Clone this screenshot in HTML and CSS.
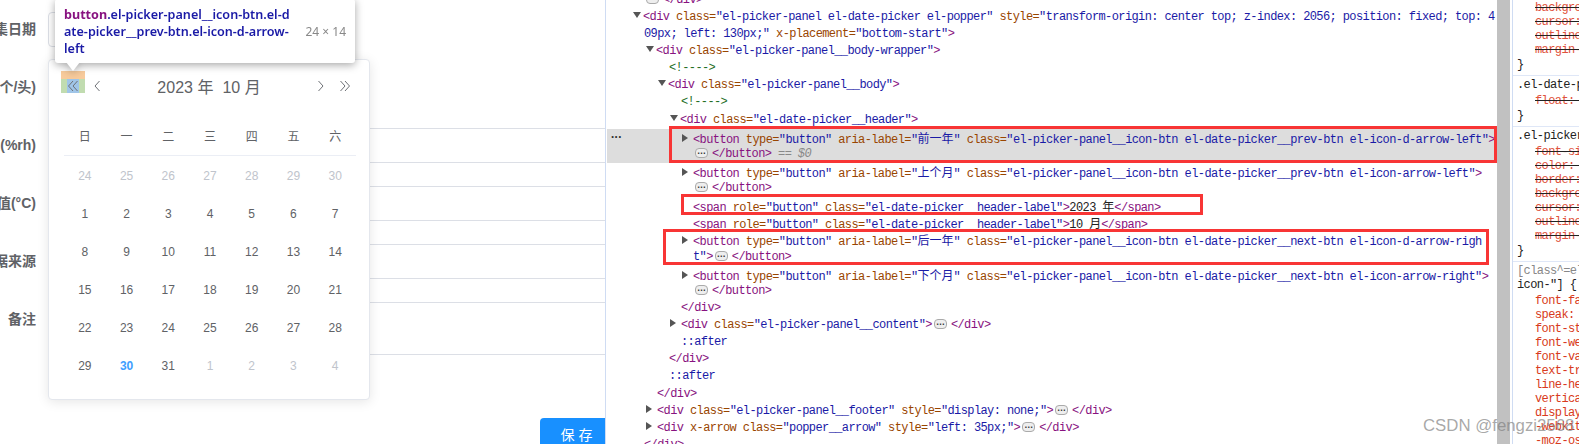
FILE: index.html
```html
<!DOCTYPE html>
<html lang="zh-CN">
<head>
<meta charset="utf-8">
<title>el-date-picker devtools</title>
<link rel="stylesheet" href="styles.css">
</head>
<body>
<div class="page">
  <section class="app">
    <div class="row"><div class="label"><span>采集日期</span></div><div class="input short"></div></div>
    <div class="row"><div class="label"><span>数量(个/头)</span></div><div class="input short"></div></div>
    <div class="row"><div class="label"><span>湿度(%rh)</span></div><div class="input"></div></div>
    <div class="row"><div class="label"><span>阈值(°C)</span></div><div class="input"></div></div>
    <div class="row"><div class="label"><span>数据来源</span></div><div class="input"></div></div>
    <div class="row tall"><div class="label"><span>备注</span></div><div class="input"></div></div>
    <button class="save" type="button">保存</button>

    <div class="panel">
      <div class="hd">
        <div class="btn hl"><span class="content"><svg width="12" height="14" viewBox="0 0 12 14"><path d="M6 2 1.5 7 6 12M10.5 2 6 7l4.500 5"/></svg></span></div>
        <div class="btn"><svg width="12" height="14" viewBox="0 0 12 14"><path d="M8.500 2 4 7l4.500 5"/></svg></div>
        <div class="title"><span>2023 年</span><span>10 月</span></div>
        <div class="btn"><svg width="12" height="14" viewBox="0 0 12 14"><path d="M3.500 2 8 7l-4.500 5"/></svg></div>
        <div class="btn"><svg width="12" height="14" viewBox="0 0 12 14"><path d="M1.500 2 6 7l-4.500 5M6 2l4.500 5L6 12"/></svg></div>
      </div>
      <div class="cal">
        <div class="wk">日</div><div class="wk">一</div><div class="wk">二</div><div class="wk">三</div><div class="wk">四</div><div class="wk">五</div><div class="wk">六</div>
        <div class="d off">24</div><div class="d off">25</div><div class="d off">26</div><div class="d off">27</div><div class="d off">28</div><div class="d off">29</div><div class="d off">30</div>
        <div class="d">1</div><div class="d">2</div><div class="d">3</div><div class="d">4</div><div class="d">5</div><div class="d">6</div><div class="d">7</div>
        <div class="d">8</div><div class="d">9</div><div class="d">10</div><div class="d">11</div><div class="d">12</div><div class="d">13</div><div class="d">14</div>
        <div class="d">15</div><div class="d">16</div><div class="d">17</div><div class="d">18</div><div class="d">19</div><div class="d">20</div><div class="d">21</div>
        <div class="d">22</div><div class="d">23</div><div class="d">24</div><div class="d">25</div><div class="d">26</div><div class="d">27</div><div class="d">28</div>
        <div class="d">29</div><div class="d today">30</div><div class="d">31</div><div class="d off">1</div><div class="d off">2</div><div class="d off">3</div><div class="d off">4</div>
      </div>
    </div>

    <div class="tip">
      <div class="tip-name"><b>button</b>.el-picker-panel__icon-btn.el-d<br>ate-picker__prev-btn.el-icon-d-arrow-<br>left</div>
      <div class="tip-size">24 × 14</div>
    </div>
  </section>

  <section class="dom">
    <div class="tree">
      <div class="r i0"><span class="pill">…</span><span class="t">&lt;/div&gt;</span></div>
      <div class="r i0"><i class="tri open"></i><span class="t">&lt;div</span> <span class="a">class=</span><span class="v">"el-picker-panel el-date-picker el-popper"</span> <span class="a">style=</span><span class="v">"transform-origin: center top; z-index: 2056; position: fixed; top: 4</span></div>
      <div class="r i0"><span class="v">09px; left: 130px;"</span> <span class="a">x-placement=</span><span class="v">"bottom-start"</span><span class="t">&gt;</span></div>
      <div class="r i1"><i class="tri open"></i><span class="t">&lt;div</span> <span class="a">class=</span><span class="v">"el-picker-panel__body-wrapper"</span><span class="t">&gt;</span></div>
      <div class="r i2"><span class="c">&lt;!----&gt;</span></div>
      <div class="r i2"><i class="tri open"></i><span class="t">&lt;div</span> <span class="a">class=</span><span class="v">"el-picker-panel__body"</span><span class="t">&gt;</span></div>
      <div class="r i3"><span class="c">&lt;!----&gt;</span></div>
      <div class="r i3"><i class="tri open"></i><span class="t">&lt;div</span> <span class="a">class=</span><span class="v">"el-date-picker__header"</span><span class="t">&gt;</span></div>
      <div class="sel">
        <span class="dots">···</span>
        <div class="r i4"><i class="tri"></i><span class="t">&lt;button</span> <span class="a">type=</span><span class="v">"button"</span> <span class="a">aria-label=</span><span class="v">"<span class="x">前一年</span>"</span> <span class="a">class=</span><span class="v">"el-picker-panel__icon-btn el-date-picker__prev-btn el-icon-d-arrow-left"</span><span class="t">&gt;</span></div>
        <div class="r i4"><span class="pill">…</span><span class="t">&lt;/button&gt;</span> <span class="eq">== $0</span></div>
      </div>
      <div class="r i4"><i class="tri"></i><span class="t">&lt;button</span> <span class="a">type=</span><span class="v">"button"</span> <span class="a">aria-label=</span><span class="v">"<span class="x">上个月</span>"</span> <span class="a">class=</span><span class="v">"el-picker-panel__icon-btn el-date-picker__prev-btn el-icon-arrow-left"</span><span class="t">&gt;</span></div>
      <div class="r i4"><span class="pill">…</span><span class="t">&lt;/button&gt;</span></div>
      <div class="r i4"><span class="t">&lt;span</span> <span class="a">role=</span><span class="v">"button"</span> <span class="a">class=</span><span class="v">"el-date-picker__header-label"</span><span class="t">&gt;</span>2023 <span class="x">年</span><span class="t">&lt;/span&gt;</span></div>
      <div class="r i4"><span class="t">&lt;span</span> <span class="a">role=</span><span class="v">"button"</span> <span class="a">class=</span><span class="v">"el-date-picker__header-label"</span><span class="t">&gt;</span>10 <span class="x">月</span><span class="t">&lt;/span&gt;</span></div>
      <div class="r i4"><i class="tri"></i><span class="t">&lt;button</span> <span class="a">type=</span><span class="v">"button"</span> <span class="a">aria-label=</span><span class="v">"<span class="x">后一年</span>"</span> <span class="a">class=</span><span class="v">"el-picker-panel__icon-btn el-date-picker__next-btn el-icon-d-arrow-righ</span></div>
      <div class="r i4"><span class="v">t"</span><span class="t">&gt;</span><span class="pill">…</span><span class="t">&lt;/button&gt;</span></div>
      <div class="r i4"><i class="tri"></i><span class="t">&lt;button</span> <span class="a">type=</span><span class="v">"button"</span> <span class="a">aria-label=</span><span class="v">"<span class="x">下个月</span>"</span> <span class="a">class=</span><span class="v">"el-picker-panel__icon-btn el-date-picker__next-btn el-icon-arrow-right"</span><span class="t">&gt;</span></div>
      <div class="r i4"><span class="pill">…</span><span class="t">&lt;/button&gt;</span></div>
      <div class="r i3"><span class="t">&lt;/div&gt;</span></div>
      <div class="r i3"><i class="tri"></i><span class="t">&lt;div</span> <span class="a">class=</span><span class="v">"el-picker-panel__content"</span><span class="t">&gt;</span><span class="pill">…</span><span class="t">&lt;/div&gt;</span></div>
      <div class="r i3"><span class="v">::after</span></div>
      <div class="r i2"><span class="t">&lt;/div&gt;</span></div>
      <div class="r i2"><span class="v">::after</span></div>
      <div class="r i1"><span class="t">&lt;/div&gt;</span></div>
      <div class="r i1"><i class="tri"></i><span class="t">&lt;div</span> <span class="a">class=</span><span class="v">"el-picker-panel__footer"</span> <span class="a">style=</span><span class="v">"display: none;"</span><span class="t">&gt;</span><span class="pill">…</span><span class="t">&lt;/div&gt;</span></div>
      <div class="r i1"><i class="tri"></i><span class="t">&lt;div</span> <span class="a">x-arrow</span> <span class="a">class=</span><span class="v">"popper__arrow"</span> <span class="a">style=</span><span class="v">"left: 35px;"</span><span class="t">&gt;</span><span class="pill">…</span><span class="t">&lt;/div&gt;</span></div>
      <div class="r i0"><span class="t">&lt;/div&gt;</span></div>
    </div>
  </section>

  <div class="scroll"></div>

  <aside class="styles">
    <div class="sec first">
      <div class="p s">background: 0 0;</div>
      <div class="p s">cursor: pointer;</div>
      <div class="p s">outline: 0;</div>
      <div class="p s">margin-top: 8px;</div>
      <div class="close">}</div>
    </div>
    <div class="sec">
      <div class="sl">.el-date-picker__prev-btn {</div>
      <div class="p s">float: left;</div>
      <div class="close">}</div>
    </div>
    <div class="sec">
      <div class="sl">.el-picker-panel__icon-btn {</div>
      <div class="p s">font-size: 12px;</div>
      <div class="p s">color: #303133;</div>
      <div class="p s">border: 0;</div>
      <div class="p s">background: 0 0;</div>
      <div class="p s">cursor: pointer;</div>
      <div class="p s">outline: 0;</div>
      <div class="p s">margin-top: 8px;</div>
      <div class="close">}</div>
    </div>
    <div class="sec">
      <div class="sl"><span class="gray">[class^=el-icon-], [class*=" el-</span></div>
      <div class="sl wrap">icon-"] {</div>
      <div class="p">font-family: element-icons!important;</div>
      <div class="p">speak: none;</div>
      <div class="p">font-style: normal;</div>
      <div class="p">font-weight: 400;</div>
      <div class="p">font-variant: normal;</div>
      <div class="p">text-transform: none;</div>
      <div class="p">line-height: 1;</div>
      <div class="p">vertical-align: baseline;</div>
      <div class="p">display: inline-block;</div>
      <div class="p">-webkit-font-smoothing: antialiased;</div>
      <div class="p">-moz-osx-font-smoothing: grayscale;</div>
    </div>
  </aside>

  <div class="mark m1"></div>
  <div class="mark m2"></div>
  <div class="mark m3"></div>
  <div class="wm">CSDN @fengzi2568</div>
</div>
</body>
</html>
```
FILE: styles.css
```css
html, body { margin: 0; padding: 0; background: #fff; }
.page { position: relative; display: flex; width: 1579px; height: 444px; overflow: hidden; font-family: "Liberation Sans", "Noto Sans CJK SC", sans-serif; }

/* left app */
.app { position: relative; flex: 0 0 605px; height: 444px; padding-top: 12px; box-sizing: border-box; overflow: hidden; display: flex; flex-direction: column; }
.row { display: flex; gap: 12px; height: 35px; margin-bottom: 23px; flex: none; }
.row.tall { height: 53px; margin-bottom: 0; }
.label { flex: 0 0 36px; height: 32px; display: flex; justify-content: flex-end; align-items: center; overflow: hidden; white-space: nowrap; font-size: 14px; font-weight: 700; color: #606266; }
.label span { flex: none; }
.input { flex: 1; margin-right: -10px; box-sizing: border-box; border: 1px solid #dcdfe6; border-radius: 4px; background: #fff; }
.input.short { flex: 0 0 220px; margin-right: 0; }
.save { flex: none; align-self: flex-end; width: 65px; height: 44px; margin-top: 63px; border: 0; padding: 0 0 13px 12px; border-radius: 4px 0 0 0; background: #1890ff; color: #fff; font: 14px "Noto Sans CJK SC", sans-serif; letter-spacing: 4px; }

/* date panel */
.panel { position: absolute; left: 48px; top: 59px; width: 322px; height: 341px; box-sizing: border-box; padding: 12px 13px 0 15px; background: #fff; border: 1px solid #e4e7ed; border-radius: 4px; box-shadow: 0 2px 12px rgba(0,0,0,.1); }
.hd { display: flex; align-items: center; height: 28px; margin: 0 0 17px -3px; width: 296px; }
.btn { position: relative; flex: none; width: 24px; height: 14px; display: flex; justify-content: center; }
.btn svg { display: block; fill: none; stroke: #6e7176; stroke-width: 1; }
.btn.hl { background: #c1dcb0; }
.btn.hl::before { content: ""; position: absolute; left: 0; right: 0; top: -8px; height: 8px; background: #f8cb9c; }
.content { width: 12px; height: 14px; background: #a0c5e8; }
.title { flex: 1; display: flex; justify-content: center; gap: 9px; font-size: 16px; color: #606266; }
.cal { display: grid; grid-template-columns: repeat(7, 1fr); grid-auto-rows: 38px; width: 292px; }
.wk { height: 39px; box-sizing: border-box; padding-bottom: 2px; border-bottom: 1px solid #ebeef5; display: flex; align-items: center; justify-content: center; font-size: 12px; color: #606266; }
.d { padding-top: 3px; display: flex; align-items: center; justify-content: center; font-size: 12px; color: #606266; }
.d.off { color: #c0c4cc; }
.d.today { color: #409eff; font-weight: 700; }

/* inspector tooltip */
.tip { position: absolute; left: 55px; top: -1px; width: 300px; height: 64px; box-sizing: border-box; padding: 8px 9px; display: flex; align-items: center; justify-content: space-between; background: #fff; border-radius: 3px; filter: drop-shadow(0 2px 4px rgba(0,0,0,.35)); }
.tip::after { content: ""; position: absolute; left: 11px; top: 63px; border-style: solid; border-width: 9px 7px 0; border-color: #fff transparent transparent; }
.tip-name { font: 600 12.6px/17px "Noto Sans", sans-serif; color: #1a1aa6; white-space: nowrap; }
.tip-name b { color: #881280; font-weight: 700; }
.tip-size { font: 12px/17px "Noto Sans", sans-serif; color: #888; }

/* elements tree */
.dom { flex: 0 0 892px; height: 444px; box-sizing: border-box; border-left: 1px solid #cfdcf3; overflow: hidden; }
.tree { margin-top: -8.3px; font: 12px/17.125px "Liberation Mono", monospace; letter-spacing: -.6px; color: #222; white-space: nowrap; }
.r { height: 17.125px; }
.i0 { padding-left: 38px; }
.i1 { padding-left: 51px; }
.i2 { padding-left: 63px; }
.i3 { padding-left: 75px; }
.i4 { padding-left: 87px; }
.t { color: #881280; }
.a { color: #994500; }
.v { color: #1a1aa6; }
.c { color: #236e25; }
.x { font-family: "Noto Sans CJK SC", sans-serif; letter-spacing: 0; }
.eq { color: #888; font-style: italic; }
.sel { position: relative; margin-left: 1px; background: #ddd; }
.sel .r { margin-left: -1px; }
.dots { position: absolute; left: 2px; top: 1px; font-weight: 700; letter-spacing: -3.6px; color: #333; }
.tri { display: inline-block; margin: 0 5px 0 -11px; width: 0; height: 0; border-style: solid; border-width: 4.500px 0 4.500px 6px; border-color: transparent transparent transparent #555; vertical-align: 1px; }
.tri.open { border-width: 6px 4.500px 0; border-color: #555 transparent transparent; margin-right: 2px; vertical-align: 2px; }
.pill { display: inline-block; width: 11px; height: 8px; margin: 0 4px 0 2px; border: .5px solid #aaa; border-radius: 4px; background: #eee; font: 700 9px/4px "Liberation Sans", sans-serif; letter-spacing: 0; text-align: center; color: #333; vertical-align: -1px; overflow: hidden; }

/* scrollbar + styles */
.scroll { flex: 0 0 13px; height: 444px; background: #c1c1c1; }
.styles { flex: none; width: 67px; margin-left: 2px; height: 444px; overflow: hidden; box-sizing: border-box; border-left: 1px solid #cfdcf3; font: 12px/14px "Liberation Mono", monospace; letter-spacing: -.6px; color: #222; white-space: nowrap; }
.sec { padding: 2px 0 3px 4px; border-top: 1px solid #dfe7f7; }
.sec.first { padding-top: 1px; border-top: 0; }
.sl { margin-bottom: 2px; }
.sl:has(+ .wrap) { margin-bottom: 0; }
.gray { color: #888; }
.p { padding-left: 18px; color: #d83a20; }
.p.s { color: #e0523c; text-decoration: line-through; text-decoration-color: #222; }
.close { margin-top: 1px; }

/* annotations */
.mark { position: absolute; box-sizing: border-box; border: 3px solid #f83535; }
.m1 { left: 669px; top: 126px; width: 828px; height: 37px; }
.m2 { left: 681px; top: 194px; width: 522px; height: 21px; }
.m3 { left: 663px; top: 229px; width: 826px; height: 36px; }
.wm { position: absolute; left: 1423px; top: 416px; font-size: 16.8px; line-height: 20px; color: rgba(130,130,130,.7); white-space: nowrap; }
```
